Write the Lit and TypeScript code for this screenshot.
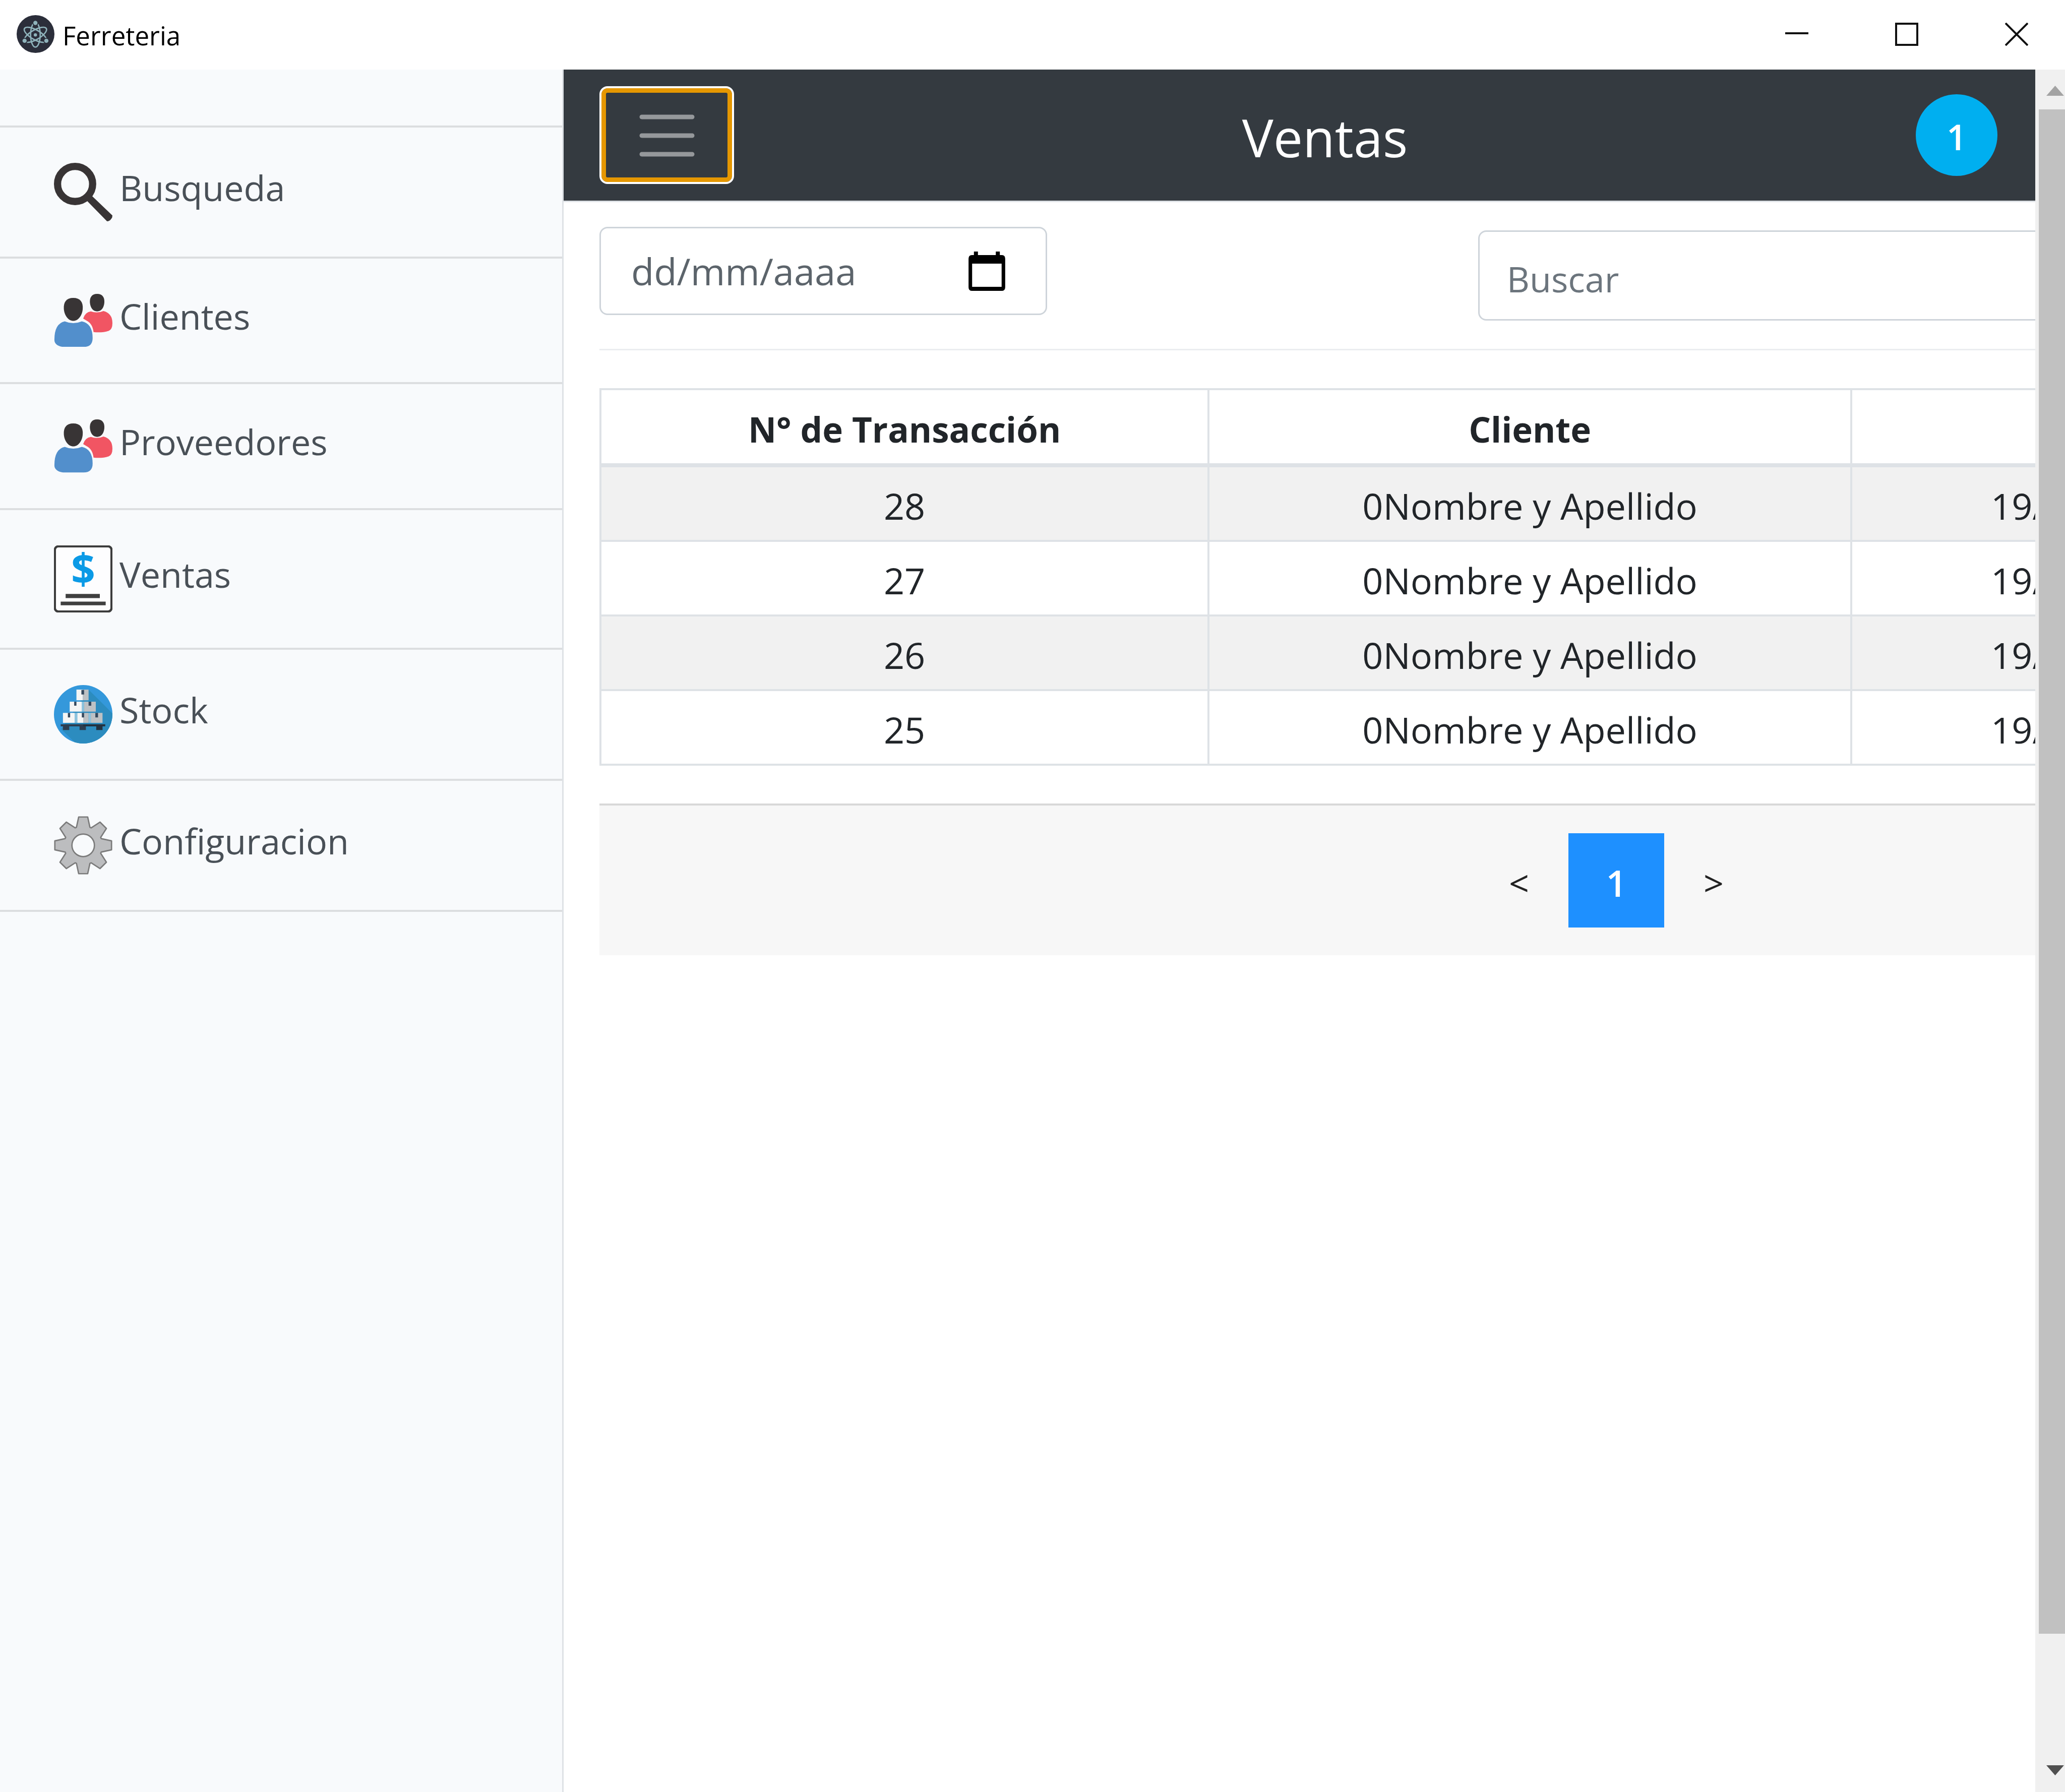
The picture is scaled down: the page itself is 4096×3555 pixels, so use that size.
import { LitElement, html, css, svg, type TemplateResult } from "lit";
import { customElement, state } from "lit/decorators.js";

interface MenuEntry {
  label: string;
  icon: TemplateResult;
}

interface Sale {
  id: number;
  client: string;
  date: string;
}

/* Outline of an eight-toothed gear centred on (65, 65). */
function gearPath(): string {
  const tooth = [[-15, -40], [-10, -63], [10, -63], [15, -40]];
  const points: string[] = [];
  for (let k = 0; k < 8; k++) {
    const a = (k * Math.PI) / 4;
    for (const [x, y] of tooth) {
      const px = 65 + x * Math.cos(a) - y * Math.sin(a);
      const py = 65 + x * Math.sin(a) + y * Math.cos(a);
      points.push(`${px.toFixed(1)} ${py.toFixed(1)}`);
    }
  }
  return `M${points.join("L")}Z`;
}

const electronIcon = html`<svg class="app-icon" viewBox="0 0 252 252" aria-hidden="true">
  <circle cx="126" cy="126" r="126" fill="#2b2e3a"></circle>
  <g fill="none" stroke="#8fb3bb" stroke-width="9">
    <ellipse cx="125" cy="131" rx="82" ry="32" transform="rotate(90 125 131)"></ellipse>
    <ellipse cx="125" cy="131" rx="84" ry="32" transform="rotate(30 125 131)"></ellipse>
    <ellipse cx="125" cy="131" rx="84" ry="32" transform="rotate(-30 125 131)"></ellipse>
  </g>
  <g fill="#8fb3bb" stroke="#2b2e3a" stroke-width="6">
    <circle cx="125" cy="52" r="17"></circle>
    <circle cx="53" cy="171" r="17"></circle>
    <circle cx="198" cy="171" r="17"></circle>
  </g>
  <circle cx="125" cy="132" r="11" fill="#8fb3bb"></circle>
</svg>`;

const searchIcon = html`<svg class="icon" viewBox="0 0 130 130" aria-hidden="true">
  <circle cx="47" cy="47" r="39" fill="none" stroke="#383435" stroke-width="16"></circle>
  <path d="M84 73L130 117Q130 122 127 125Q124 130 118 130L73 84Z" fill="#383435"></path>
</svg>`;

const peopleIcon = html`<svg class="icon" viewBox="0 0 130 118" aria-hidden="true">
  <path d="M96 0C108 0 113 8 112 20C111 31 105 39 96 39C87 39 81 31 80 20C79 8 84 0 96 0Z" fill="#383435"></path>
  <path d="M82 39Q96 44 110 38Q130 43 130 65Q130 79 122 82Q107 87 88 85Q86 66 72 59L65 55Q69 41 82 39Z" fill="#f15563"></path>
  <path d="M43 9C58 9 65 18 64 33C63 48 54 60 43 60C32 60 23 48 22 33C21 18 28 9 43 9Z" fill="#383435"></path>
  <path d="M24 61Q43 69 62 61Q86 66 86 98Q86 118 66 118H20Q1 115 1 102Q1 66 24 61Z" fill="#528fcc"></path>
</svg>`;

const invoiceIcon = html`<svg class="icon" viewBox="0 0 130 149" aria-hidden="true">
  <rect x="2" y="2" width="126" height="145" rx="8" fill="#fdfdfe" stroke="#3c3c3c" stroke-width="5"></rect>
  <text x="65" y="86" text-anchor="middle" font-family="Open Sans, sans-serif" font-weight="700" font-size="94" fill="#0b9ae6">$</text>
  <path d="M26 108H102V117H26ZM15 125H115V133H15Z" fill="#3f3f3f"></path>
</svg>`;

const stockIcon = html`<svg class="icon" viewBox="0 0 130 130" aria-hidden="true">
  <defs><clipPath id="disc"><circle cx="65" cy="65" r="65"></circle></clipPath></defs>
  <g clip-path="url(#disc)">
    <rect width="130" height="130" fill="#3498db"></rect>
    <path d="M77 10L130 63V130H49L16 98Z" fill="#2c8cbf"></path>
    <path d="M46 62H52V84H46ZM77 62H82V84H77ZM62 37H67V59H62Z" fill="#8cc3de"></path>
    <path d="M50 10H64V34H50ZM35 37H62V59H35ZM20 62H46V84H20ZM52 62H65V84H52Z" fill="#f4f5f5"></path>
    <path d="M64 10H77V34H64ZM67 37H93V59H67ZM65 62H77V84H65ZM82 62H108V84H82Z" fill="#bdc1c4"></path>
    <path d="M61 11H67V21H61ZM45 37H50V46H45ZM77 37H83V46H77ZM31 62H36V72H31ZM62 62H67V72H62ZM92 62H98V72H92Z" fill="#34495e"></path>
    <path d="M15 87H65V92H71V100H57V92H34V100H20V92H15Z" fill="#2c3e50"></path>
    <path d="M65 87H114V92H108V100H94V92H65Z" fill="#233240"></path>
  </g>
</svg>`;

const gearIcon = html`<svg class="icon" viewBox="0 0 130 130" aria-hidden="true">
  <path d=${gearPath()} fill="#bcbdbf" stroke="#7b7b7b" stroke-width="3" stroke-linejoin="round"></path>
  <circle cx="65" cy="65" r="25" fill="#f8fafc" stroke="#7b7b7b" stroke-width="3"></circle>
</svg>`;

const calendarIcon = html`<svg class="calendar-icon" viewBox="0 0 82 88" aria-hidden="true">
  <path fill-rule="evenodd" d="M12 0H21V8H61V0H70V8H74Q82 8 82 16V80Q82 88 74 88H8Q0 88 0 80V16Q0 8 8 8H12ZM8 27V79H74V27Z" fill="#000"></path>
</svg>`;

@customElement("app-root")
export class AppRoot extends LitElement {
  @state() private page = 1;

  private menu: MenuEntry[] = [
    { label: "Busqueda", icon: searchIcon },
    { label: "Clientes", icon: peopleIcon },
    { label: "Proveedores", icon: peopleIcon },
    { label: "Ventas", icon: invoiceIcon },
    { label: "Stock", icon: stockIcon },
    { label: "Configuracion", icon: gearIcon },
  ];

  private sales: Sale[] = [28, 27, 26, 25].map((id) => ({
    id,
    client: "0Nombre y Apellido",
    date: "19/",
  }));

  static styles = css`
    :host {
      display: flex;
      flex-direction: column;
      height: 100vh;
      overflow: hidden;
      background: #fff;
      color: #212529;
      font-family: "Open Sans", "Noto Sans", sans-serif;
      font-size: 70px;
      line-height: 96px;
    }
    *,
    *::before {
      box-sizing: border-box;
    }
    svg {
      display: block;
    }
    button,
    input {
      font: inherit;
      color: inherit;
      margin: 0;
      padding: 0;
      border: 0;
      background: none;
    }

    .titlebar {
      display: flex;
      align-items: center;
      flex: none;
      height: 138px;
      padding: 0 73px 3px 33px;
      color: #000;
      font-size: 51px;
    }
    .app-icon {
      width: 75px;
      height: 75px;
    }
    .app-name {
      margin-left: 16px;
      padding-top: 4px;
    }
    .window-controls {
      display: flex;
      gap: 172px;
      margin-left: auto;
    }
    .window-controls svg {
      width: 46px;
      height: 46px;
    }

    .body {
      display: flex;
      flex: 1;
      min-height: 0;
    }

    .sidebar {
      flex: none;
      width: 1118px;
      border-right: 3px solid #dee2e6;
      background: #f8fafc;
      color: #495057;
    }
    .sidebar-heading {
      height: 115px;
      border-bottom: 4px solid #dcdee0;
    }
    .menu-item {
      display: flex;
      align-items: center;
      gap: 14px;
      padding: 70px 107px;
      border-bottom: 4px solid #dcdee0;
      color: inherit;
      text-decoration: none;
    }
    .menu-item .icon {
      width: 116px;
    }
    .menu-label {
      padding-bottom: 18px;
      margin: -20px 0;
    }

    .main {
      flex: 1;
      min-width: 0;
      overflow: hidden;
    }
    .navbar {
      display: flex;
      align-items: center;
      justify-content: space-between;
      padding: 33px 75px 33px 71px;
      border-bottom: 3px solid #dee2e6;
      background: #343a40;
      color: #fff;
    }
    .toggler {
      display: flex;
      align-items: center;
      justify-content: center;
      width: 267px;
      height: 194px;
      border: 4px solid #fff;
      border-radius: 16px;
      box-shadow: inset 0 0 0 9px #e59700;
    }
    .toggler svg {
      width: 110px;
      height: 86px;
    }
    .page-title {
      margin: 0;
      padding-top: 8px;
      font-size: 104px;
      font-weight: 400;
      line-height: 142px;
    }
    .badge {
      display: flex;
      align-items: center;
      justify-content: center;
      width: 162px;
      height: 162px;
      padding-top: 6px;
      border-radius: 50%;
      background: #00aff0;
      font-weight: 600;
    }

    .content {
      width: calc(138% + 77px);
      padding: 49px 0 0 71px;
    }
    .filters {
      display: flex;
      align-items: flex-start;
      justify-content: space-between;
    }
    .date-field {
      display: flex;
      align-items: center;
      width: 22%;
      height: 175px;
      padding: 0 80px 0 60px;
      border: 3px solid #ced4da;
      border-radius: 16px;
      color: #495057;
      font-size: 74px;
    }
    .date-input {
      flex: 1;
      min-width: 0;
    }
    .date-input::placeholder {
      color: #5c646b;
      opacity: 1;
    }
    .calendar-icon {
      width: 73px;
      height: 78px;
    }
    .search-input {
      width: 56.8%;
      height: 179px;
      margin-top: 7px;
      padding: 12px 56px 0 54px;
      border: 3px solid #ced4da;
      border-radius: 16px;
    }
    .search-input::placeholder {
      color: #6c757d;
      opacity: 1;
    }
    .divider {
      height: 3px;
      margin: 56px 0 75px;
      border: 0;
      background: #ebedf0;
    }

    .sales {
      width: 100%;
      border-collapse: separate;
      border-spacing: 0;
      border-top: 4px solid #dee2e6;
      table-layout: fixed;
      font-size: 72px;
      text-align: center;
    }
    .sales th,
    .sales td {
      height: 148px;
      padding: 8px 0 0;
      border-left: 4px solid #dee2e6;
      border-bottom: 4px solid #dee2e6;
    }
    .sales th {
      height: 153px;
      border-bottom-width: 8px;
      font-weight: 700;
      font-size: 69px;
    }
    .sales tbody tr:nth-child(odd) {
      background: #f1f1f1;
    }
    .col-id {
      width: 29.9%;
    }
    .col-client {
      width: 31.6%;
    }
    .sales .cell-date {
      padding-left: 275px;
      text-align: left;
    }

    .pager {
      display: flex;
      justify-content: center;
      gap: 3px;
      margin-top: 75px;
      padding: 55px 0;
      border-top: 4px solid #d8d8d8;
      background: #f7f7f7;
      color: #222;
    }
    .pager button {
      width: 190px;
      height: 187px;
      padding-top: 8px;
    }
    .pager .current {
      background: #1e90ff;
      color: #fff;
      font-size: 72px;
      font-weight: 600;
    }

    .scrollbar {
      display: flex;
      flex: none;
      flex-direction: column;
      width: 59px;
      background: #f0f0f0;
    }
    .scroll-button {
      display: flex;
      align-items: center;
      justify-content: center;
      height: 79px;
      padding: 4px 0 0 20px;
    }
    .scroll-button.down {
      padding: 0 0 8px 20px;
    }
    .scroll-button svg {
      width: 35px;
      height: 20px;
    }
    .track {
      flex: 1;
      padding-left: 7px;
    }
    .thumb {
      height: 92.8%;
      background: #c1c1c1;
    }
  `;

  private windowControl(label: string, shape: TemplateResult) {
    return html`<button aria-label=${label}>
      <svg viewBox="0 0 46 46" fill="none" stroke="#111" stroke-width="4">${shape}</svg>
    </button>`;
  }

  render() {
    return html`
      <header class="titlebar">
        ${electronIcon}
        <span class="app-name">Ferreteria</span>
        <div class="window-controls">
          ${this.windowControl("Minimizar", svg`<path d="M0 21H46"></path>`)}
          ${this.windowControl("Maximizar", svg`<rect x="2" y="2" width="42" height="42"></rect>`)}
          ${this.windowControl("Cerrar", svg`<path d="M1 1L45 45M45 1L1 45"></path>`)}
        </div>
      </header>

      <div class="body">
        <nav class="sidebar">
          <div class="sidebar-heading"></div>
          ${this.menu.map(
            (entry) => html`<a class="menu-item" href="#">
              ${entry.icon}<span class="menu-label">${entry.label}</span>
            </a>`,
          )}
        </nav>

        <main class="main">
          <div class="navbar">
            <button class="toggler" aria-label="Menu">
              <svg viewBox="0 0 110 86" stroke="#95989b" stroke-width="9" stroke-linecap="round">
                <path d="M5 7H105M5 44H105M5 81H105"></path>
              </svg>
            </button>
            <h1 class="page-title">Ventas</h1>
            <span class="badge">1</span>
          </div>

          <div class="content">
            <div class="filters">
              <div class="date-field">
                <input class="date-input" type="text" placeholder="dd/mm/aaaa" aria-label="Fecha" />
                <button aria-label="Calendario">${calendarIcon}</button>
              </div>
              <input class="search-input" type="search" placeholder="Buscar" aria-label="Buscar" />
            </div>
            <hr class="divider" />

            <table class="sales">
              <thead>
                <tr>
                  <th class="col-id" scope="col">N° de Transacción</th>
                  <th class="col-client" scope="col">Cliente</th>
                  <th></th>
                </tr>
              </thead>
              <tbody>
                ${this.sales.map(
                  (sale) => html`<tr>
                    <td>${sale.id}</td>
                    <td>${sale.client}</td>
                    <td class="cell-date">${sale.date}</td>
                  </tr>`,
                )}
              </tbody>
            </table>

            <div class="pager">
              <button @click=${() => (this.page = Math.max(1, this.page - 1))}>&lt;</button>
              <button class="current">${this.page}</button>
              <button>&gt;</button>
            </div>
          </div>
        </main>

        <div class="scrollbar">
          <button class="scroll-button" aria-label="Subir">
            <svg viewBox="0 0 35 20"><path d="M17.5 0L35 20H0Z" fill="#a3a3a3"></path></svg>
          </button>
          <div class="track"><div class="thumb"></div></div>
          <button class="scroll-button down" aria-label="Bajar">
            <svg viewBox="0 0 35 20"><path d="M17.5 20L35 0H0Z" fill="#505050"></path></svg>
          </button>
        </div>
      </div>
    `;
  }
}
